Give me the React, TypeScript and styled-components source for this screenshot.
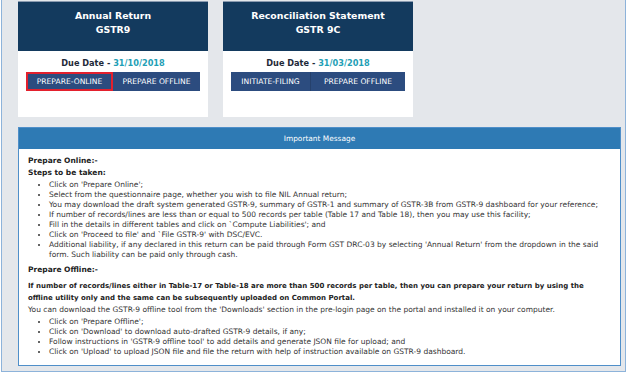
import React from "react";
import styled, { createGlobalStyle } from "styled-components";

const GlobalStyle = createGlobalStyle`
  html, body {
    margin: 0;
    padding: 0;
    background: #ffffff;
  }
  body {
    font-family: "DejaVu Sans", Verdana, sans-serif;
  }
`;

interface ButtonStyleProps {
  readonly $w: number;
  readonly $active?: boolean;
}

interface IReturnCardProps {
  title: string;
  code: string;
  dueDate: string;
  actions: { label: string; width: number; active?: boolean }[];
}

const Frame = styled.div`
  margin-left: 1px;
  width: 625px;
  height: 372px;
  background-color: #e4e7eb;
  border: 1px solid #8db3da;
  border-top: none;
  padding: 1px 6px 0 16px;
  box-sizing: border-box;
`;

const CardRow = styled.div`
  display: flex;
  gap: 15px;
`;

const CardStyle = styled.div`
  width: 190px;
  background-color: #ffffff;
  display: flex;
  flex-direction: column;

  .head {
    height: 50px;
    background-color: #133a5e;
    border-top: 1px solid #8a9bb0;
    box-sizing: border-box;
    padding-top: 7px;
    color: #ffffff;
    font-weight: bold;
    font-size: 9.4px;
    line-height: 14px;
    text-align: center;
  }

  .body {
    height: 66px;
    display: flex;
    flex-direction: column;
    align-items: center;
  }

  .due {
    margin-top: 7px;
    font-size: 8.2px;
    line-height: 10px;
    font-weight: bold;
    color: #1e2a38;

    span {
      color: #1f9fb6;
    }
  }
`;

const ButtonGroup = styled.div`
  display: flex;
  margin-top: 4px;
  height: 19px;
`;

const ActionButton = styled.div<ButtonStyleProps>`
  width: ${(p) => p.$w}px;
  height: 19px;
  box-sizing: border-box;
  background-color: #2c4c7f;
  color: #ffffff;
  font-size: 7.6px;
  white-space: nowrap;
  display: flex;
  align-items: center;
  justify-content: center;
  border: ${(p) => (p.$active ? "2px solid #e3202d" : "none")};
  border-right: ${(p) => (p.$active ? "2px solid #e3202d" : "1px solid #26416c")};
  &:last-child {
    border-right: none;
  }
`;

const Panel = styled.div`
  margin-top: 10px;
  width: 603px;
  background-color: #ffffff;
  border: 1px solid #4f8fc9;
  box-sizing: border-box;
`;

const PanelHead = styled.div`
  height: 21px;
  background-color: #2e7ab4;
  color: #ffffff;
  font-size: 7.4px;
  display: flex;
  align-items: center;
  justify-content: center;
`;

const PanelBody = styled.div`
  padding: 7px 10px 8px 9px;
  color: #333333;
  font-size: 7.5px;
  line-height: 10px;
`;

const Heading = styled.div<{ $gap?: number }>`
  font-weight: bold;
  color: #222222;
  margin-top: ${(p) => p.$gap || 0}px;
`;

const StrongPara = styled.p`
  margin: 5px 0 0;
  font-weight: bold;
  font-size: 7px;
  color: #222222;
  line-height: 12px;
`;

const Para = styled.p`
  margin: 1px 0 0;
`;

const Steps = styled.ul`
  margin: 2px 0 0;
  padding-left: 21px;
  list-style: disc;

  li::marker {
    font-size: 6px;
  }
`;

const ReturnCard: React.FunctionComponent<IReturnCardProps> = ({
  title,
  code,
  dueDate,
  actions,
}) => {
  return (
    <CardStyle>
      <div className="head">
        <div>{title}</div>
        <div>{code}</div>
      </div>
      <div className="body">
        <div className="due">
          Due Date - <span>{dueDate}</span>
        </div>
        <ButtonGroup>
          {actions.map((a) => (
            <ActionButton key={a.label} $w={a.width} $active={a.active}>
              {a.label}
            </ActionButton>
          ))}
        </ButtonGroup>
      </div>
    </CardStyle>
  );
};

const onlineSteps = [
  "Click on 'Prepare Online';",
  "Select from the questionnaire page, whether you wish to file NIL Annual return;",
  "You may download the draft system generated GSTR-9, summary of GSTR-1 and summary of GSTR-3B from GSTR-9 dashboard for your reference;",
  "If number of records/lines are less than or equal to 500 records per table (Table 17 and Table 18), then you may use this facility;",
  "Fill in the details in different tables and click on `Compute Liabilities'; and",
  "Click on 'Proceed to file' and `File GSTR-9' with DSC/EVC.",
  "Additional liability, if any declared in this return can be paid through Form GST DRC-03 by selecting 'Annual Return' from the dropdown in the said form. Such liability can be paid only through cash.",
];

const offlineSteps = [
  "Click on 'Prepare Offline';",
  "Click on 'Download' to download auto-drafted GSTR-9 details, if any;",
  "Follow instructions in 'GSTR-9 offline tool' to add details and generate JSON file for upload; and",
  "Click on 'Upload' to upload JSON file and file the return with help of instruction available on GSTR-9 dashboard.",
];

export default function App() {
  return (
    <>
      <GlobalStyle />
      <Frame>
        <CardRow>
          <ReturnCard
            title="Annual Return"
            code="GSTR9"
            dueDate="31/10/2018"
            actions={[
              { label: "PREPARE-ONLINE", width: 87, active: true },
              { label: "PREPARE OFFLINE", width: 87 },
            ]}
          />
          <ReturnCard
            title="Reconciliation Statement"
            code="GSTR 9C"
            dueDate="31/03/2018"
            actions={[
              { label: "INITIATE-FILING", width: 80 },
              { label: "PREPARE OFFLINE", width: 94 },
            ]}
          />
        </CardRow>
        <Panel>
          <PanelHead>Important Message</PanelHead>
          <PanelBody>
            <Heading>Prepare Online:-</Heading>
            <Heading $gap={2}>Steps to be taken:</Heading>
            <Steps>
              {onlineSteps.map((s) => (
                <li key={s}>{s}</li>
              ))}
            </Steps>
            <Heading $gap={5}>Prepare Offline:-</Heading>
            <StrongPara>
              If number of records/lines either in Table-17 or Table-18 are more than 500 records per table, then you can
              prepare your return by using the offline utility only and the same can be subsequently uploaded on Common
              Portal.
            </StrongPara>
            <Para>
              You can download the GSTR-9 offline tool from the 'Downloads' section in the pre-login page on the portal and
              installed it on your computer.
            </Para>
            <Steps>
              {offlineSteps.map((s) => (
                <li key={s}>{s}</li>
              ))}
            </Steps>
          </PanelBody>
        </Panel>
      </Frame>
    </>
  );
}
